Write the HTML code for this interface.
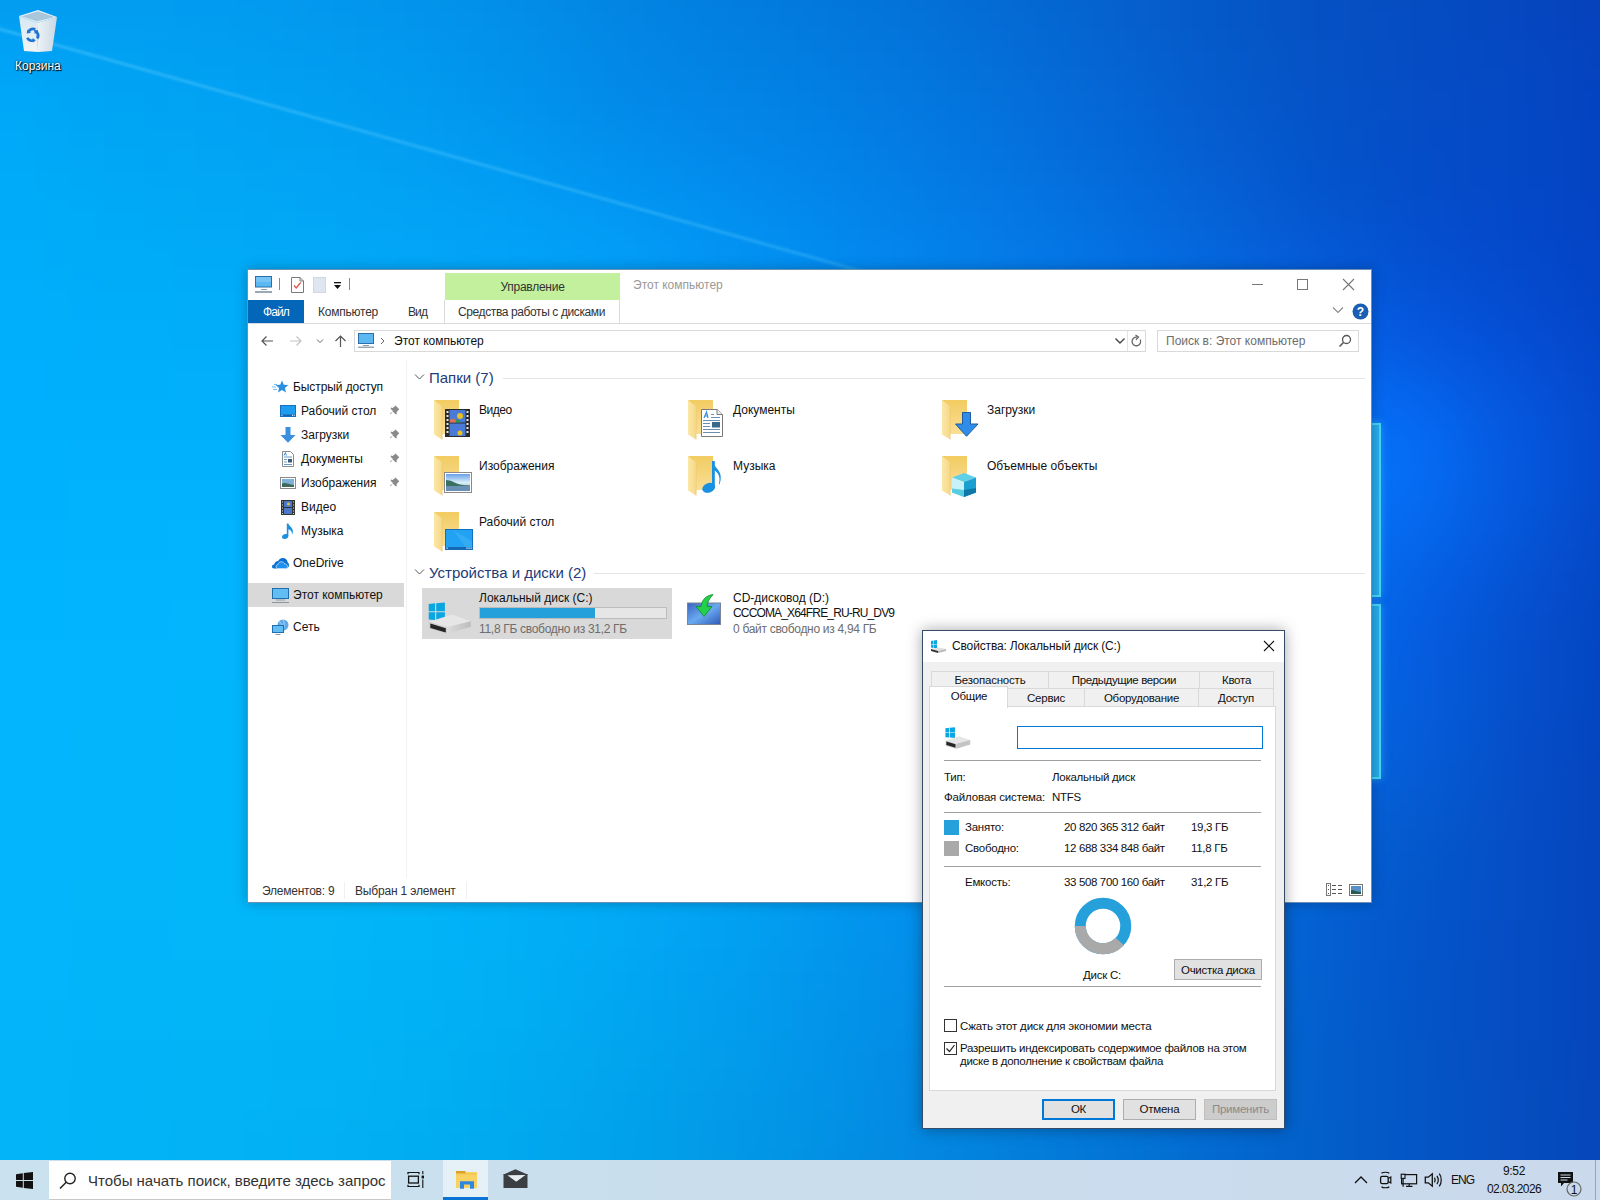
<!DOCTYPE html>
<html><head><meta charset="utf-8">
<style>
*{margin:0;padding:0;box-sizing:border-box}
html,body{width:1600px;height:1200px;overflow:hidden;background:#0590e6}
body{position:relative;font-family:"Liberation Sans",sans-serif;font-size:12px;color:#000}
.a{position:absolute}
.t{position:absolute;white-space:nowrap;line-height:16px;height:16px}
#bgw{position:absolute;left:-80px;top:-80px;width:1760px;height:1360px;filter:blur(18px)}
#bgw div{position:absolute;left:0;width:1760px;height:40px}
</style></head><body>
<div id="bgw"><div style="top:0px;background:linear-gradient(90deg,#0397ed 0px,#0496ec 100px,#0497ed 200px,#0396ee 300px,#0293ec 400px,#028fe8 500px,#0289e5 600px,#0281e0 700px,#027adc 800px,#0374d8 900px,#036dd4 1000px,#0466cf 1100px,#055eca 1200px,#0556c5 1300px,#054fc1 1400px,#054abe 1500px,#0544bb 1600px,#053eb7 1700px)"></div><div style="top:40px;background:linear-gradient(90deg,#029bef 0px,#039aee 100px,#039af0 200px,#0299f0 300px,#0296ee 400px,#0292eb 500px,#028be7 600px,#0283e2 700px,#027dde 800px,#0277db 900px,#0370d6 1000px,#0468d1 1100px,#0560cc 1200px,#0557c7 1300px,#0550c2 1400px,#054bc0 1500px,#0546bd 1600px,#053fb9 1700px)"></div><div style="top:80px;background:linear-gradient(90deg,#019ff2 0px,#029ef2 100px,#029ef2 200px,#019df1 300px,#0299ef 400px,#0295ed 500px,#028ee9 600px,#0286e4 700px,#027fe1 800px,#0279dd 900px,#0372d9 1000px,#046ad4 1100px,#0561ce 1200px,#0558c8 1300px,#0551c4 1400px,#054cc2 1500px,#0547c0 1600px,#0540bb 1700px)"></div><div style="top:120px;background:linear-gradient(90deg,#00a3f5 0px,#00a3f6 100px,#01a1f3 200px,#019ff2 300px,#019cf1 400px,#0198ef 500px,#0191eb 600px,#0288e7 700px,#0282e3 800px,#027ce0 900px,#0375dc 1000px,#046cd7 1100px,#0563d1 1200px,#055aca 1300px,#0552c5 1400px,#054cc3 1500px,#0548c2 1600px,#0541bd 1700px)"></div><div style="top:160px;background:linear-gradient(90deg,#00a6f8 0px,#00a7f8 100px,#00a4f4 200px,#01a2f3 300px,#019ff2 400px,#019af0 500px,#0193ed 600px,#028ae9 700px,#0285e6 800px,#027fe3 900px,#0378df 1000px,#046fda 1100px,#0565d4 1200px,#055bcc 1300px,#0552c7 1400px,#054dc5 1500px,#0548c4 1600px,#0441bf 1700px)"></div><div style="top:200px;background:linear-gradient(90deg,#00a9fa 0px,#00a9f9 100px,#00a6f4 200px,#01a4f4 300px,#02a1f3 400px,#029df2 500px,#0197f0 600px,#028eec 700px,#0288e9 800px,#0282e6 900px,#037ae2 1000px,#0471dd 1100px,#0467d7 1200px,#055dcf 1300px,#0453c9 1400px,#044dc7 1500px,#0448c5 1600px,#0442c0 1700px)"></div><div style="top:240px;background:linear-gradient(90deg,#00abfb 0px,#00abf9 100px,#00a8f5 200px,#01a6f4 300px,#02a4f5 400px,#02a0f4 500px,#019bf3 600px,#0193f0 700px,#028ced 800px,#0285e9 900px,#037de5 1000px,#0474e0 1100px,#046ada 1200px,#055fd3 1300px,#0454cc 1400px,#044dc9 1500px,#0448c7 1600px,#0442c2 1700px)"></div><div style="top:280px;background:linear-gradient(90deg,#00acfc 0px,#00acfa 100px,#00aaf6 200px,#01a8f5 300px,#02a6f6 400px,#02a3f6 500px,#029ff6 600px,#0299f4 700px,#0291f0 800px,#0289ed 900px,#0380e8 1000px,#0477e4 1100px,#046dde 1200px,#0562d7 1300px,#0556d0 1400px,#044ecd 1500px,#0448c9 1600px,#0442c3 1700px)"></div><div style="top:320px;background:linear-gradient(90deg,#00aefd 0px,#00adfa 100px,#00abf7 200px,#01aaf7 300px,#02a8f7 400px,#02a6f8 500px,#02a2f8 600px,#029df7 700px,#0294f3 800px,#028cf0 900px,#0383ec 1000px,#047ae8 1100px,#0470e3 1200px,#0565dd 1300px,#055ad7 1400px,#0450d1 1500px,#0449cc 1600px,#0442c4 1700px)"></div><div style="top:360px;background:linear-gradient(90deg,#00affd 0px,#00aefb 100px,#00adf9 200px,#01acf8 300px,#02aaf9 400px,#02a8f9 500px,#02a5fa 600px,#02a0f9 700px,#0298f6 800px,#028ff2 900px,#0386ef 1000px,#047dec 1100px,#0474e8 1200px,#056ae3 1300px,#055fde 1400px,#0553d7 1500px,#044bcf 1600px,#0443c6 1700px)"></div><div style="top:400px;background:linear-gradient(90deg,#00affe 0px,#00affc 100px,#00aefa 200px,#01adf9 300px,#02acfa 400px,#02aafb 500px,#02a7fb 600px,#02a2fb 700px,#029bf8 800px,#0292f5 900px,#0389f2 1000px,#0480ef 1100px,#0577ed 1200px,#056eea 1300px,#0565e7 1400px,#0558df 1500px,#044ed4 1600px,#0444c8 1700px)"></div><div style="top:440px;background:linear-gradient(90deg,#00b0fe 0px,#00affd 100px,#00affb 200px,#01affa 300px,#02aefb 400px,#02acfc 500px,#02a9fc 600px,#02a4fc 700px,#029dfa 800px,#0395f7 900px,#038cf5 1000px,#0483f3 1100px,#057bf1 1200px,#0573f0 1300px,#066bef 1400px,#0560e8 1500px,#0552d8 1600px,#0446c9 1700px)"></div><div style="top:480px;background:linear-gradient(90deg,#00b1ff 0px,#00b0fd 100px,#01b0fc 200px,#01b0fb 300px,#02affc 400px,#02aefd 500px,#02abfd 600px,#02a6fd 700px,#029ffb 800px,#0397f9 900px,#038ef7 1000px,#0486f6 1100px,#057ef5 1200px,#0577f5 1300px,#0671f6 1400px,#0568f1 1500px,#0556dc 1600px,#0447ca 1700px)"></div><div style="top:520px;background:linear-gradient(90deg,#00b2ff 0px,#00b1fe 100px,#01b1fd 200px,#02b1fc 300px,#02b1fc 400px,#02affd 500px,#02acfe 600px,#02a7fd 700px,#02a1fc 800px,#0398fa 900px,#0390f9 1000px,#0488f8 1100px,#0580f8 1200px,#057af9 1300px,#0675fa 1400px,#056cf4 1500px,#0557dd 1600px,#0447c9 1700px)"></div><div style="top:560px;background:linear-gradient(90deg,#00b3ff 0px,#00b2fe 100px,#01b2fd 200px,#02b2fd 300px,#02b2fd 400px,#02b0fe 500px,#02adfe 600px,#02a9fe 700px,#02a2fd 800px,#039afb 900px,#0392fa 1000px,#0489f9 1100px,#0582f9 1200px,#057bfa 1300px,#0675fa 1400px,#056bf1 1500px,#0557db 1600px,#0447c8 1700px)"></div><div style="top:600px;background:linear-gradient(90deg,#00b3ff 0px,#01b3fe 100px,#01b3fd 200px,#02b3fd 300px,#02b3fd 400px,#02b1fe 500px,#02aefe 600px,#02a9fe 700px,#02a3fd 800px,#039bfc 900px,#0393fb 1000px,#048afa 1100px,#0583fa 1200px,#057bfa 1300px,#0673f7 1400px,#0566ec 1500px,#0555d7 1600px,#0446c5 1700px)"></div><div style="top:640px;background:linear-gradient(90deg,#01b4ff 0px,#01b4fe 100px,#02b4fd 200px,#02b4fd 300px,#02b4fd 400px,#02b2fe 500px,#02affe 600px,#02aafe 700px,#02a4fd 800px,#039cfc 900px,#0393fb 1000px,#048bfa 1100px,#0583fa 1200px,#057af8 1300px,#0670f3 1400px,#0561e5 1500px,#0552d3 1600px,#0445c3 1700px)"></div><div style="top:680px;background:linear-gradient(90deg,#01b4ff 0px,#01b4fe 100px,#02b4fd 200px,#02b5fd 300px,#02b4fd 400px,#02b3fe 500px,#02b0fe 600px,#02abfd 700px,#02a4fd 800px,#039cfc 900px,#0394fa 1000px,#048bf9 1100px,#0582f8 1200px,#0579f6 1300px,#066def 1400px,#055ee1 1500px,#0550cf 1600px,#0444c0 1700px)"></div><div style="top:720px;background:linear-gradient(90deg,#01b5ff 0px,#02b5fe 100px,#02b5fd 200px,#02b5fd 300px,#02b5fd 400px,#02b3fd 500px,#02b0fd 600px,#02abfd 700px,#02a4fc 800px,#039cfb 900px,#0394fa 1000px,#048bf8 1100px,#0582f6 1200px,#0578f3 1300px,#066cec 1400px,#055dde 1500px,#054fcd 1600px,#0443bf 1700px)"></div><div style="top:760px;background:linear-gradient(90deg,#02b5ff 0px,#02b5fe 100px,#02b5fd 200px,#02b6fc 300px,#02b5fc 400px,#02b4fd 500px,#02b0fd 600px,#02abfc 700px,#02a4fb 800px,#039cfa 900px,#0394f8 1000px,#048af6 1100px,#0581f4 1200px,#0576f0 1300px,#066ae8 1400px,#055ddc 1500px,#054fcb 1600px,#0443be 1700px)"></div><div style="top:800px;background:linear-gradient(90deg,#02b5fe 0px,#02b5fd 100px,#03b6fc 200px,#02b6fc 300px,#02b6fc 400px,#02b4fc 500px,#02b0fc 600px,#02abfb 700px,#02a4fa 800px,#039cf8 900px,#0393f6 1000px,#048af4 1100px,#047ff1 1200px,#0575ec 1300px,#0569e4 1400px,#055cd9 1500px,#054ec9 1600px,#0443bd 1700px)"></div><div style="top:840px;background:linear-gradient(90deg,#02b6fe 0px,#02b5fd 100px,#03b6fc 200px,#02b6fc 300px,#02b6fb 400px,#02b4fb 500px,#02b0fb 600px,#02abfa 700px,#02a4f8 800px,#039bf7 900px,#0392f4 1000px,#0489f2 1100px,#047eee 1200px,#0573e8 1300px,#0567df 1400px,#055bd4 1500px,#054ec7 1600px,#0543bc 1700px)"></div><div style="top:880px;background:linear-gradient(90deg,#02b6fe 0px,#03b6fc 100px,#03b6fb 200px,#02b6fb 300px,#02b6fb 400px,#02b4fa 500px,#02b0fa 600px,#02abf8 700px,#02a3f7 800px,#039bf5 900px,#0391f2 1000px,#0487ef 1100px,#047dea 1200px,#0471e4 1300px,#0565da 1400px,#0559ce 1500px,#054ec5 1600px,#0543bc 1700px)"></div><div style="top:920px;background:linear-gradient(90deg,#02b6fd 0px,#03b5fc 100px,#03b6fb 200px,#02b6fa 300px,#02b6fa 400px,#02b4f9 500px,#02b0f8 600px,#02aaf7 700px,#02a3f5 800px,#029af3 900px,#0390f0 1000px,#0386ec 1100px,#047be7 1200px,#046fe0 1300px,#0463d6 1400px,#0457cb 1500px,#054dc4 1600px,#0543bc 1700px)"></div><div style="top:960px;background:linear-gradient(90deg,#02b6fd 0px,#03b5fb 100px,#03b6fa 200px,#02b6fa 300px,#02b6f9 400px,#02b4f8 500px,#02aff7 600px,#02a9f5 700px,#02a2f3 800px,#0299f1 900px,#038fee 1000px,#0385ea 1100px,#047ae4 1200px,#046edd 1300px,#0461d3 1400px,#0456ca 1500px,#054dc4 1600px,#0543bb 1700px)"></div><div style="top:1000px;background:linear-gradient(90deg,#03b6fc 0px,#03b5fb 100px,#02b5fa 200px,#02b6f9 300px,#02b6f8 400px,#01b3f7 500px,#01aff6 600px,#02a9f4 700px,#02a1f1 800px,#0298ee 900px,#038eeb 1000px,#0384e7 1100px,#0378e1 1200px,#046dda 1300px,#0460d1 1400px,#0455c9 1500px,#054cc3 1600px,#0544bb 1700px)"></div><div style="top:1040px;background:linear-gradient(90deg,#03b6fc 0px,#03b5fa 100px,#02b5f9 200px,#02b5f8 300px,#01b5f7 400px,#01b2f6 500px,#01aef4 600px,#01a7f2 700px,#029fef 800px,#0296ec 900px,#038de9 1000px,#0382e4 1100px,#0377df 1200px,#036bd7 1300px,#045fcf 1400px,#0454c8 1500px,#054cc2 1600px,#0544bb 1700px)"></div><div style="top:1080px;background:linear-gradient(90deg,#03b6fb 0px,#03b4fa 100px,#02b4f8 200px,#02b5f7 300px,#01b4f6 400px,#01b1f5 500px,#01adf3 600px,#01a6f0 700px,#029eed 800px,#0295ea 900px,#038ce7 1000px,#0381e2 1100px,#0376dc 1200px,#036bd5 1300px,#035fce 1400px,#0454c7 1500px,#054cc2 1600px,#0544bb 1700px)"></div><div style="top:1120px;background:linear-gradient(90deg,#03b5fb 0px,#03b4f9 100px,#02b3f7 200px,#02b4f6 300px,#01b3f5 400px,#01b0f3 500px,#01abf1 600px,#01a5ee 700px,#029deb 800px,#0294e8 900px,#038ae5 1000px,#0380e0 1100px,#0375da 1200px,#036ad3 1300px,#035fcc 1400px,#0455c6 1500px,#054cc1 1600px,#0644ba 1700px)"></div><div style="top:1160px;background:linear-gradient(90deg,#03b5fa 0px,#03b4f8 100px,#02b3f7 200px,#02b3f5 300px,#02b2f4 400px,#01aff2 500px,#01aaf0 600px,#01a3ed 700px,#029be9 800px,#0293e6 900px,#0389e3 1000px,#037fde 1100px,#0375d8 1200px,#0369d2 1300px,#035fcb 1400px,#0455c6 1500px,#054dc0 1600px,#0645ba 1700px)"></div><div style="top:1200px;background:linear-gradient(90deg,#03b5fa 0px,#03b4f8 100px,#02b3f6 200px,#02b2f4 300px,#02b0f3 400px,#01adf1 500px,#01a8ee 600px,#01a2eb 700px,#029ae8 800px,#0292e4 900px,#0388e1 1000px,#037edc 1100px,#0374d7 1200px,#0369d0 1300px,#035fca 1400px,#0455c5 1500px,#054dc0 1600px,#0645b9 1700px)"></div><div style="top:1240px;background:linear-gradient(90deg,#03b5f9 0px,#03b3f7 100px,#02b2f5 200px,#02b1f3 300px,#02aff2 400px,#01acef 500px,#01a7ed 600px,#01a1ea 700px,#0299e6 800px,#0290e3 900px,#0387df 1000px,#037eda 1100px,#0373d5 1200px,#0369cf 1300px,#035fc9 1400px,#0456c4 1500px,#054dbf 1600px,#0645b9 1700px)"></div><div style="top:1280px;background:linear-gradient(90deg,#03b5f9 0px,#03b3f7 100px,#02b2f4 200px,#02b0f3 300px,#02aef0 400px,#01abee 500px,#01a6eb 600px,#019fe8 700px,#0298e5 800px,#028fe1 900px,#0386dd 1000px,#037dd9 1100px,#0373d4 1200px,#0369ce 1300px,#045fc9 1400px,#0456c3 1500px,#054ebe 1600px,#0645b8 1700px)"></div><div style="top:1320px;background:linear-gradient(90deg,#03b5f8 0px,#02b3f6 100px,#02b1f4 200px,#02aff2 300px,#02adef 400px,#02a9ed 500px,#01a4ea 600px,#029ee7 700px,#0297e4 800px,#028ee0 900px,#0386dc 1000px,#037cd7 1100px,#0372d2 1200px,#0368cd 1300px,#045fc8 1400px,#0456c2 1500px,#054ebd 1600px,#0646b7 1700px)"></div></div>
<!-- light ray -->
<div class="a" style="left:-20px;top:21.5px;width:1000px;height:2.5px;background:linear-gradient(90deg,rgba(90,205,255,.45),rgba(90,205,255,.35) 80%,rgba(90,205,255,.25));transform-origin:0 50%;transform:rotate(15.7deg);filter:blur(.8px)"></div>

<!-- recycle bin -->
<svg class="a" style="left:17px;top:8px" width="42" height="46" viewBox="0 0 42 46">
  <defs><linearGradient id="rbl" x1="0" y1="0" x2="0" y2="1"><stop offset="0" stop-color="#d6e8f2"/><stop offset="1" stop-color="#f2f4f5"/></linearGradient><linearGradient id="rbr" x1="0" y1="0" x2="1" y2="0"><stop offset="0" stop-color="#eef3f6"/><stop offset="1" stop-color="#c8d8e4"/></linearGradient></defs>
  <path d="M2 8L20 15 21 44 7 43Z" fill="url(#rbl)"/>
  <path d="M20 15L40 9 35 43 21 44Z" fill="url(#rbr)"/>
  <path d="M2 8L21 2 40 9 20 15Z" fill="#eaf4fa"/>
  <path d="M4.5 8.3L21 3.2 37.5 9 20 13.6Z" fill="#a9c6da"/>
  <g fill="#1f74d4"><path d="M10.5 22.5a6.5 6.5 0 0 1 8.5-2.3l-1.3 2.4a3.8 3.8 0 0 0-4.8 1.4l1.2.8-4.3.6.4-4.2z"/><path d="M21 23.5a6.5 6.5 0 0 1 .3 7.8l-2.2-1.5a3.8 3.8 0 0 0-.1-4.5l-1.1.8-.9-4.1 4.1.3z"/><path d="M16.5 33.8a6.5 6.5 0 0 1-7.4-3.5l2.4-1a3.8 3.8 0 0 0 4.2 2l-.3-1.4 3.4 2.4-3 2.6z"/></g>
</svg>
<div class="t" style="left:15px;top:58px;color:#fff;text-shadow:0 0 2px #000,1px 1px 1px #000">Корзина</div>

<!-- windows logo panes glow on right -->
<div class="a" style="left:1350px;top:423px;width:31px;height:174px;border:2px solid #45d6f4;border-left:none;border-right-width:2.5px;background:linear-gradient(90deg,rgba(40,150,215,.8),rgba(45,185,235,.85));box-shadow:0 0 8px rgba(70,200,255,.55)"></div>
<div class="a" style="left:1350px;top:604px;width:31px;height:175px;border:2px solid #45d6f4;border-left:none;border-right-width:2.5px;background:linear-gradient(90deg,rgba(40,150,215,.8),rgba(45,185,235,.85));box-shadow:0 0 8px rgba(70,200,255,.55)"></div>
<!-- Explorer window -->
<div class="a" id="exp" style="left:247px;top:269px;width:1125px;height:634px;background:#fff;border:1px solid rgba(10,70,130,.6);box-shadow:0 0 12px rgba(0,0,0,.25)"></div>
<!-- QAT -->
<svg class="a" style="left:255px;top:276px" width="18" height="17" viewBox="0 0 18 17"><rect x="0.5" y="0.5" width="16" height="10.5" fill="#5cb8f0" stroke="#2a6fa8"/><rect x="1" y="1" width="15" height="5" fill="#8fd0f8" opacity=".5"/><rect x="6" y="13" width="6" height="1" fill="#8aa0b0"/><rect x="0" y="15" width="17" height="2" fill="#9aa8b4"/></svg>
<div class="a" style="left:279px;top:278px;width:1px;height:12px;background:#8a8a8a"></div>
<svg class="a" style="left:291px;top:277px" width="13" height="16" viewBox="0 0 13 16"><path d="M.5 .5h8.5l3.5 3.5v11.5h-12z" fill="#fff" stroke="#7a7a7a"/><path d="M9 .5v3.5h3.5" fill="none" stroke="#7a7a7a"/><path d="M3 8.5l2.2 2.5 4.5-5.5" fill="none" stroke="#e2574c" stroke-width="1.4"/></svg>
<svg class="a" style="left:313px;top:277px" width="14" height="16" viewBox="0 0 14 16"><rect x=".5" y=".5" width="12" height="15" fill="#dfe6f2" stroke="#d0d8e6"/></svg>
<svg class="a" style="left:333px;top:281px" width="9" height="9" viewBox="0 0 9 9"><rect x="1" y="1" width="7" height="1.3" fill="#111"/><path d="M1 4h7l-3.5 4z" fill="#111"/></svg>
<div class="a" style="left:349px;top:278px;width:1px;height:12px;background:#8a8a8a"></div>

<!-- contextual tab group -->
<div class="a" style="left:445px;top:273px;width:175px;height:27px;background:#c2f09c"></div>
<div class="t" style="left:445px;width:175px;text-align:center;top:279px;color:#333;letter-spacing:-.25px">Управление</div>
<div class="t" style="left:633px;top:277px;color:#999">Этот компьютер</div>

<!-- window controls -->
<div class="a" style="left:1252px;top:284px;width:11px;height:1px;background:#777"></div>
<div class="a" style="left:1297px;top:279px;width:11px;height:11px;border:1px solid #777"></div>
<svg class="a" style="left:1342px;top:278px" width="13" height="13" viewBox="0 0 13 13"><path d="M1 1l11 11M12 1L1 12" stroke="#777" stroke-width="1.1"/></svg>

<!-- ribbon tabs -->
<div class="a" style="left:248px;top:300px;width:56px;height:23px;background:#0366b8"></div>
<div class="t" style="left:248px;width:56px;text-align:center;top:304px;color:#fff;letter-spacing:-.9px">Файл</div>
<div class="t" style="left:318px;top:304px;color:#333;letter-spacing:-.23px">Компьютер</div>
<div class="t" style="left:408px;top:304px;color:#333;letter-spacing:-.9px">Вид</div>
<div class="a" style="left:444px;top:300px;width:1px;height:23px;background:#dadbdc"></div>
<div class="a" style="left:619px;top:300px;width:1px;height:23px;background:#dadbdc"></div>
<div class="t" style="left:458px;top:304px;color:#333;letter-spacing:-.39px">Средства работы с дисками</div>
<svg class="a" style="left:1332px;top:306px" width="12" height="8" viewBox="0 0 12 8"><path d="M1 1.5l5 5 5-5" fill="none" stroke="#8a8a8a" stroke-width="1.1"/></svg>
<svg class="a" style="left:1352px;top:303px" width="17" height="17" viewBox="0 0 17 17"><circle cx="8.5" cy="8.5" r="8" fill="#1a5fb4"/><text x="8.5" y="13" text-anchor="middle" font-family="Liberation Sans" font-weight="bold" font-size="12" fill="#fff">?</text></svg>
<div class="a" style="left:248px;top:323px;width:1123px;height:1px;background:#dadbdc"></div>

<!-- address row -->
<svg class="a" style="left:260px;top:335px" width="14" height="12" viewBox="0 0 14 12"><path d="M13 6H2M6.5 1.5L2 6l4.5 4.5" fill="none" stroke="#555" stroke-width="1.2"/></svg>
<svg class="a" style="left:289px;top:335px" width="14" height="12" viewBox="0 0 14 12"><path d="M1 6h11M7.5 1.5L12 6l-4.5 4.5" fill="none" stroke="#c4c4c4" stroke-width="1.2"/></svg>
<svg class="a" style="left:316px;top:338px" width="8" height="6" viewBox="0 0 8 6"><path d="M1 1.5l3 3 3-3" fill="none" stroke="#666" stroke-width="1"/></svg>
<svg class="a" style="left:334px;top:334px" width="13" height="14" viewBox="0 0 13 14"><path d="M6.5 13V2M1.5 7l5-5 5 5" fill="none" stroke="#555" stroke-width="1.2"/></svg>
<div class="a" style="left:354px;top:330px;width:792px;height:22px;border:1px solid #d9d9d9"></div>
<svg class="a" style="left:358px;top:333px" width="17" height="15" viewBox="0 0 17 15"><rect x=".5" y=".5" width="15" height="10" fill="#5cb8f0" stroke="#2a6fa8"/><rect x="5" y="12" width="6" height="1" fill="#8aa0b0"/><rect x="0" y="13.5" width="16" height="1.5" fill="#9aa8b4"/></svg>
<svg class="a" style="left:380px;top:337px" width="5" height="8" viewBox="0 0 5 8"><path d="M1 1l3 3-3 3" fill="none" stroke="#666" stroke-width="1"/></svg>
<div class="t" style="left:394px;top:333px;color:#111">Этот компьютер</div>
<svg class="a" style="left:1114px;top:337px" width="12" height="8" viewBox="0 0 12 8"><path d="M1.5 1.5l4.5 4.5 4.5-4.5" fill="none" stroke="#444" stroke-width="1.4"/></svg>
<div class="a" style="left:1127px;top:331px;width:1px;height:20px;background:#e3e3e3"></div>
<svg class="a" style="left:1130px;top:334px" width="13" height="14" viewBox="0 0 13 14"><path d="M10.2 5.5A4.3 4.3 0 1 1 7 3.2" fill="none" stroke="#666" stroke-width="1.3"/><path d="M5.5 1l3 2.2-2.5 2.6" fill="none" stroke="#666" stroke-width="1.3"/></svg>
<div class="a" style="left:1157px;top:330px;width:202px;height:22px;border:1px solid #d9d9d9"></div>
<div class="t" style="left:1166px;top:333px;color:#6d6d6d">Поиск в: Этот компьютер</div>
<svg class="a" style="left:1338px;top:334px" width="14" height="14" viewBox="0 0 14 14"><circle cx="8.5" cy="5.5" r="4" fill="none" stroke="#555" stroke-width="1.3"/><path d="M5.5 8.5L1.5 12.5" stroke="#555" stroke-width="1.6"/></svg>

<!-- symbol defs -->
<svg width="0" height="0" style="position:absolute">
 <defs>
  <linearGradient id="fback" x1="0" y1="0" x2="0" y2="1"><stop offset="0" stop-color="#f2cc62"/><stop offset="1" stop-color="#f9de96"/></linearGradient>
  <linearGradient id="ffront" x1="0" y1="0" x2="1" y2="0"><stop offset="0" stop-color="#fce7a6"/><stop offset="1" stop-color="#f6d98a"/></linearGradient>
  <symbol id="folder" viewBox="0 0 40 40">
   <path d="M0 0H25V34H8Z" fill="url(#fback)"/>
   <path d="M0 0L8.1 6.5V39.6L0 34.5Z" fill="url(#ffront)"/>
   <path d="M8.1 6.5V39.6" stroke="#e9c56b" stroke-width=".6"/>
  </symbol>
 </defs>
</svg>

<!-- nav pane -->
<div class="a" style="left:406px;top:360px;width:1px;height:518px;background:#f2f2f2"></div>
<div class="a" style="left:248px;top:583px;width:156px;height:24px;background:#d9d9d9"></div>

<svg class="a" style="left:272px;top:380px" width="17" height="14" viewBox="0 0 17 14"><path d="M10 .5l1.8 4.2 4.6.3-3.5 3 1.1 4.5L10 10l-4 2.5 1.1-4.5-3.5-3 4.6-.3z" fill="#2b8fe0"/><path d="M0 7h4M1 9.5h4M2 4.5h3" stroke="#7bbcf0" stroke-width="1"/></svg>
<div class="t" style="left:293px;top:379px;color:#111;letter-spacing:-.08px">Быстрый доступ</div>

<svg class="a" style="left:280px;top:405px" width="16" height="12" viewBox="0 0 16 12"><rect x=".5" y=".5" width="15" height="11" fill="#1e9cf0" stroke="#1670c0"/><rect x="1" y="9.5" width="14" height="1.5" fill="#1565b0"/><rect x="1.5" y="9.8" width="1" height="1" fill="#fff"/><rect x="12" y="9.8" width="1" height="1" fill="#fff"/><rect x="13.7" y="9.8" width="1" height="1" fill="#fff"/></svg>
<div class="t" style="left:301px;top:403px;color:#111">Рабочий стол</div>
<svg class="a" style="left:280px;top:427px" width="16" height="16" viewBox="0 0 16 16"><path d="M5.5 0h5v8h5L8 15.8 .5 8h5z" fill="#3a8fdf"/></svg>
<div class="t" style="left:301px;top:427px;color:#111">Загрузки</div>
<svg class="a" style="left:282px;top:451px" width="12" height="16" viewBox="0 0 12 16"><path d="M.5 .5h8l3 3v12h-11z" fill="#fff" stroke="#8a8a8a"/><path d="M2 6h8M2 8.5h3M2 11h3M2 13.5h8" stroke="#6a9ac8" stroke-width="1"/><rect x="6" y="8" width="4" height="3.5" fill="#3a5a7a"/><path d="M2 4.5l1.5-3 .8 3" stroke="#3a8fdf" fill="none"/></svg>
<div class="t" style="left:301px;top:451px;color:#111">Документы</div>
<svg class="a" style="left:280px;top:477px" width="16" height="12" viewBox="0 0 16 12"><rect x=".5" y=".5" width="15" height="11" fill="#fff" stroke="#8a8a8a"/><rect x="2" y="2" width="12" height="8" fill="#7fb0d8"/><path d="M2 6.5c3-1.5 6 .5 12 1.5V10H2z" fill="#3e6a5a"/></svg>
<div class="t" style="left:301px;top:475px;color:#111">Изображения</div>
<svg class="a" style="left:281px;top:500px" width="14" height="15" viewBox="0 0 14 15"><rect x="0" y="0" width="14" height="15" fill="#333"/><rect x="3" y="1" width="8" height="6" fill="#4a78c8"/><rect x="3" y="8" width="8" height="6" fill="#4a78c8"/><circle cx="7.5" cy="4" r="1.6" fill="#e0c040"/><g fill="#ddd"><rect x="1" y="1.5" width="1" height="1"/><rect x="1" y="4.5" width="1" height="1"/><rect x="1" y="7.5" width="1" height="1"/><rect x="1" y="10.5" width="1" height="1"/><rect x="1" y="13" width="1" height="1"/><rect x="12" y="1.5" width="1" height="1"/><rect x="12" y="4.5" width="1" height="1"/><rect x="12" y="7.5" width="1" height="1"/><rect x="12" y="10.5" width="1" height="1"/><rect x="12" y="13" width="1" height="1"/></g></svg>
<div class="t" style="left:301px;top:499px;color:#111">Видео</div>
<svg class="a" style="left:281px;top:523px" width="13" height="16" viewBox="0 0 13 16"><path d="M5.8 .5h1.6c.5 2.5 4.5 4 4.5 8 0 1.5-.5 2.5-1 3 .5-2.5-1-4.5-3.5-5.3V13c0 1.8-1.8 3-3.8 3C2 16 1 15 1 14c0-1.8 2-3 4-3 .3 0 .6 0 .8.1z" fill="#1a90e0"/></svg>
<div class="t" style="left:301px;top:523px;color:#111">Музыка</div>
<svg class="a" style="left:390px;top:405px" width="10" height="10" viewBox="0 0 10 10"><path d="M5.5 .5l4 4-1.2.6-1.8 2.4.3 1.5-1 .5L2.8 6.5.8 9.2 0 9l.6-.8L3 6.2.5 3.6 1 2.6l1.5.3L5 1.2z" fill="#8a8a8a"/></svg>
<svg class="a" style="left:390px;top:429px" width="10" height="10" viewBox="0 0 10 10"><path d="M5.5 .5l4 4-1.2.6-1.8 2.4.3 1.5-1 .5L2.8 6.5.8 9.2 0 9l.6-.8L3 6.2.5 3.6 1 2.6l1.5.3L5 1.2z" fill="#8a8a8a"/></svg>
<svg class="a" style="left:390px;top:453px" width="10" height="10" viewBox="0 0 10 10"><path d="M5.5 .5l4 4-1.2.6-1.8 2.4.3 1.5-1 .5L2.8 6.5.8 9.2 0 9l.6-.8L3 6.2.5 3.6 1 2.6l1.5.3L5 1.2z" fill="#8a8a8a"/></svg>
<svg class="a" style="left:390px;top:477px" width="10" height="10" viewBox="0 0 10 10"><path d="M5.5 .5l4 4-1.2.6-1.8 2.4.3 1.5-1 .5L2.8 6.5.8 9.2 0 9l.6-.8L3 6.2.5 3.6 1 2.6l1.5.3L5 1.2z" fill="#8a8a8a"/></svg>

<svg class="a" style="left:272px;top:558px" width="17" height="11" viewBox="0 0 17 11"><path d="M2 10.5C.7 10.5 0 9.6 0 8.5 0 7.3 1 6.5 2.2 6.6 2.6 4.3 4.3 3 6.2 3c.9-1.8 2.6-3 4.6-3 2.6 0 4.7 2 4.9 4.5C16.5 5 17 6 17 7.2c0 1.9-1.4 3.3-3.2 3.3z" fill="#0a6fd0"/><path d="M6 10.5c-1.1 0-2-.8-2-1.9 0-1 .8-1.8 1.8-1.9.3-1.7 1.8-3 3.6-3 1.5 0 2.8.9 3.4 2.2 1.5 0 2.7 1.2 2.7 2.7 0 1-.8 1.9-1.9 1.9z" fill="#1e90f0" stroke="#fff" stroke-width=".6"/></svg>
<div class="t" style="left:293px;top:555px;color:#111">OneDrive</div>
<svg class="a" style="left:272px;top:588px" width="17" height="15" viewBox="0 0 17 15"><rect x=".5" y=".5" width="16" height="10" fill="#62bdf2" stroke="#1f6fae"/><rect x="4" y="11.5" width="9" height="1" fill="#8fa0ae"/><rect x="0" y="14" width="17" height="1" fill="#8a949c"/></svg>
<div class="t" style="left:293px;top:587px;color:#111">Этот компьютер</div>
<svg class="a" style="left:272px;top:619px" width="17" height="16" viewBox="0 0 17 16"><circle cx="11" cy="6" r="5.5" fill="#5fa8e8"/><path d="M7 3c2 .5 3 2 3 4M11 .5c1.5 2 1.5 8 0 11" stroke="#cfe6fa" fill="none" stroke-width=".7"/><rect x=".5" y="6.5" width="11" height="7" fill="#62bdf2" stroke="#1f6fae"/><rect x="3.5" y="15" width="5" height="1" fill="#8a949c"/></svg>
<div class="t" style="left:293px;top:619px;color:#111">Сеть</div>

<!-- content: folders group -->
<svg class="a" style="left:414px;top:373px" width="11" height="8" viewBox="0 0 11 8"><path d="M1 1.5l4.5 4.5 4.5-4.5" fill="none" stroke="#555" stroke-width="1"/></svg>
<div class="t" style="left:429px;top:368px;height:20px;line-height:20px;font-size:15px;color:#233b78">Папки (7)</div>
<div class="a" style="left:503px;top:378px;width:862px;height:1px;background:#e5e5e5"></div>

<svg class="a" style="left:434px;top:400px" width="40" height="40"><use href="#folder"/></svg>
<svg class="a" style="left:445px;top:409px" width="25" height="28" viewBox="0 0 25 28"><rect x="0" y="0" width="25" height="28" fill="#2a2a2a"/><rect x="4.5" y="1" width="16" height="12.5" fill="#4a7ad8"/><rect x="4.5" y="14.5" width="16" height="12.5" fill="#4a7ad8"/><circle cx="15" cy="7" r="3" fill="#e8c020"/><path d="M5 11c2-2 4-1 6 0v2.5H5z" fill="#e07050"/><path d="M12 10l4 3.5H10z" fill="#2a9a40"/><circle cx="15" cy="24" r="2.5" fill="#e8c020"/><g fill="#e8e8e8"><rect x="1.5" y="2" width="2" height="2"/><rect x="1.5" y="6" width="2" height="2"/><rect x="1.5" y="10" width="2" height="2"/><rect x="1.5" y="14" width="2" height="2"/><rect x="1.5" y="18" width="2" height="2"/><rect x="1.5" y="22" width="2" height="2"/><rect x="21.5" y="2" width="2" height="2"/><rect x="21.5" y="6" width="2" height="2"/><rect x="21.5" y="10" width="2" height="2"/><rect x="21.5" y="14" width="2" height="2"/><rect x="21.5" y="18" width="2" height="2"/><rect x="21.5" y="22" width="2" height="2"/></g></svg>
<div class="t" style="left:479px;top:402px;color:#111;letter-spacing:-.5px">Видео</div>

<svg class="a" style="left:688px;top:400px" width="40" height="40"><use href="#folder"/></svg>
<svg class="a" style="left:701px;top:409px" width="22" height="28" viewBox="0 0 22 28"><path d="M.5 .5h15.5l5.5 5v22h-21z" fill="#fff" stroke="#7a7a7a"/><path d="M16 .5v5h5.5" fill="#eee" stroke="#7a7a7a"/><path d="M3 9l2.5-6 1.5 6M4 7h3" stroke="#3a8fdf" fill="none" stroke-width="1.2"/><path d="M10 5.5h3M10 8.5h9M2 11.5h17M2 14.5h7M2 17.5h7M2 20.5h17M2 23.5h17" stroke="#6a8fb0" stroke-width="1"/><rect x="11" y="13" width="8" height="5.5" fill="#3a6a8a"/></svg>
<div class="t" style="left:733px;top:402px;color:#111">Документы</div>

<svg class="a" style="left:942px;top:400px" width="40" height="40"><use href="#folder"/></svg>
<svg class="a" style="left:955px;top:412px" width="24" height="25" viewBox="0 0 24 25"><path d="M7.5 .5h8v11.5H23L11.5 24.3 .5 12h7z" fill="#2f8ce8" stroke="#1f5a9c" stroke-width="1"/></svg>
<div class="t" style="left:987px;top:402px;color:#111">Загрузки</div>

<svg class="a" style="left:434px;top:456px" width="40" height="40"><use href="#folder"/></svg>
<svg class="a" style="left:444px;top:472px" width="28" height="21" viewBox="0 0 28 21"><rect x=".5" y=".5" width="27" height="20" fill="#fff" stroke="#8a8a8a"/><defs><linearGradient id="sky" x1="0" y1="0" x2="0" y2="1"><stop offset="0" stop-color="#6aa0e8"/><stop offset=".5" stop-color="#d8eef8"/><stop offset="1" stop-color="#8ab0c8"/></linearGradient></defs><rect x="2" y="2" width="24" height="17" fill="url(#sky)"/><path d="M2 8c5 0 9 3 14 4.5 4 1 7 .5 10 1V14H2z" fill="#3a7060"/><rect x="2" y="14" width="24" height="5" fill="#6a90b8"/></svg>
<div class="t" style="left:479px;top:458px;color:#111">Изображения</div>

<svg class="a" style="left:688px;top:456px" width="40" height="40"><use href="#folder"/></svg>
<svg class="a" style="left:700px;top:459px" width="24" height="34" viewBox="0 0 24 34"><rect x="12" y="2" width="2.8" height="27" fill="#1a90e0"/><ellipse cx="8.7" cy="28.8" rx="6.6" ry="4.7" transform="rotate(-22 8.7 28.8)" fill="#1a90e0"/><path d="M12.5 2c1 4 3.5 6 6 9.5 2.6 3.6 3 8 1.2 13.5-.3.6-.8.5-.7-.1 1.3-5.5.2-9.4-3-12.3-1.2-1-2.3-1.8-3.5-2.4z" fill="#1a90e0"/></svg>
<div class="t" style="left:733px;top:458px;color:#111">Музыка</div>

<svg class="a" style="left:942px;top:456px" width="40" height="40"><use href="#folder"/></svg>
<svg class="a" style="left:952px;top:473px" width="25" height="25" viewBox="0 0 25 25"><path d="M0 4.5L12 0l12 4.5-12 4.5z" fill="#5fd0e8"/><path d="M0 4.5l12 4.5V24L0 19.5z" fill="#c8f2fa"/><path d="M24 4.5L12 9V24l12-4.5z" fill="#1a9fd0"/><path d="M12 17l12-2v4.5L12 24z" fill="#0e78a8"/><path d="M0 15.5l12 1.5V24L0 19.5z" fill="#58cce0"/></svg>
<div class="t" style="left:987px;top:458px;color:#111">Объемные объекты</div>

<svg class="a" style="left:434px;top:512px" width="40" height="40"><use href="#folder"/></svg>
<svg class="a" style="left:445px;top:529px" width="28" height="21" viewBox="0 0 28 21"><rect x=".5" y=".5" width="27" height="20" fill="#22a2f2" stroke="#1270c0"/><path d="M8 1L22 20H27V12z" fill="#44b6f8" opacity=".5"/><rect x="1" y="18" width="26" height="2.5" fill="#1468b4"/><g fill="#fff"><rect x="1.5" y="18.5" width="1.2" height="1.2"/><rect x="21.5" y="18.5" width="1.2" height="1.2"/><rect x="23.5" y="18.5" width="1.2" height="1.2"/><rect x="25.5" y="18.5" width="1.2" height="1.2"/></g></svg>
<div class="t" style="left:479px;top:514px;color:#111">Рабочий стол</div>

<!-- devices group -->
<svg class="a" style="left:414px;top:568px" width="11" height="8" viewBox="0 0 11 8"><path d="M1 1.5l4.5 4.5 4.5-4.5" fill="none" stroke="#555" stroke-width="1"/></svg>
<div class="t" style="left:429px;top:563px;height:20px;line-height:20px;font-size:15px;color:#233b78">Устройства и диски (2)</div>
<div class="a" style="left:594px;top:573px;width:771px;height:1px;background:#e5e5e5"></div>

<div class="a" style="left:422px;top:588px;width:250px;height:51px;background:#d9d9d9"></div>
<svg class="a" style="left:428px;top:602px" width="44" height="34" viewBox="0 0 44 34"><defs><linearGradient id="drf" x1="0" y1="0" x2="1" y2="0"><stop offset="0" stop-color="#dcdcdc"/><stop offset="1" stop-color="#bdbdbd"/></linearGradient></defs><path d="M.7 2L7.1 1.3V9.3H.7zM8.2 1.2L16.9.4V9.3H8.2zM.7 10.2H7.1V18L.7 17.4zM8.2 10.2H16.9V18.8L8.2 18z" fill="#0aa6e2"/><path d="M1 19.8L19 25.2 42.8 19.2 24 12.5z" fill="#e6e6e6"/><path d="M1 19.8L19 25.2V31.8L1 26.8z" fill="#cfcfcf"/><path d="M2.3 21.6L17.8 26.2V30.4L2.3 25.9z" fill="#262626"/><path d="M19 25.2L42.8 19.2V24.8L19 31.8z" fill="url(#drf)"/></svg>
<div class="t" style="left:479px;top:590px;color:#111">Локальный диск (C:)</div>
<div class="a" style="left:479px;top:607px;width:188px;height:12px;background:#e6e6e6;border:1px solid #bcbcbc"></div>
<div class="a" style="left:480px;top:608px;width:115px;height:10px;background:#26a0da"></div>
<div class="t" style="left:479px;top:621px;color:#6d6d6d;letter-spacing:-.3px">11,8 ГБ свободно из 31,2 ГБ</div>

<svg class="a" style="left:687px;top:594px" width="34" height="31" viewBox="0 0 34 31"><defs><linearGradient id="cdg" x1="0" y1="0" x2="1" y2="1"><stop offset="0" stop-color="#3a62c0"/><stop offset=".5" stop-color="#6aaaf0"/><stop offset="1" stop-color="#2e58b8"/></linearGradient></defs><rect x=".5" y="9" width="33" height="21.5" fill="url(#cdg)" stroke="#7a8494"/><path d="M26 .5c-7 1-11 5-12 12h-5l8 10 8-10h-5c.5-5 2.5-8 6-12z" fill="#22d04a" stroke="#118830" stroke-width=".8"/></svg>
<div class="t" style="left:733px;top:590px;color:#111">CD-дисковод (D:)</div>
<div class="t" style="left:733px;top:605px;color:#111;letter-spacing:-.85px">CCCOMA_X64FRE_RU-RU_DV9</div>
<div class="t" style="left:733px;top:621px;color:#6d6d6d;letter-spacing:-.3px">0 байт свободно из 4,94 ГБ</div>

<!-- status bar -->
<div class="t" style="left:262px;top:883px;color:#333;letter-spacing:-.24px">Элементов: 9</div>
<div class="a" style="left:344px;top:882px;width:1px;height:17px;background:#f0f0f0"></div>
<div class="t" style="left:355px;top:883px;color:#333;letter-spacing:-.17px">Выбран 1 элемент</div>
<div class="a" style="left:466px;top:882px;width:1px;height:17px;background:#f0f0f0"></div>
<svg class="a" style="left:1326px;top:883px" width="17" height="13" viewBox="0 0 17 13"><rect x=".5" y=".5" width="4" height="12" fill="none" stroke="#777"/><g fill="#555"><rect x="2" y="2" width="1" height="1"/><rect x="2" y="6" width="1" height="1"/><rect x="2" y="10" width="1" height="1"/><rect x="6" y="2" width="4" height="1"/><rect x="12" y="2" width="4" height="1"/><rect x="6" y="6" width="4" height="1"/><rect x="12" y="6" width="4" height="1"/><rect x="6" y="10" width="4" height="1"/><rect x="12" y="10" width="4" height="1"/></g></svg>
<svg class="a" style="left:1349px;top:884px" width="14" height="12" viewBox="0 0 14 12"><rect x=".5" y=".5" width="13" height="11" fill="#fff" stroke="#777"/><rect x="2" y="2" width="10" height="8" fill="#5a90c8"/><path d="M2 6c3 0 6 2 10 2v2H2z" fill="#2a5a4a"/></svg>


<!-- Properties dialog -->
<div class="a" id="dlg" style="left:922px;top:630px;width:363px;height:499px;background:#f0f0f0;border:1px solid rgba(5,35,70,.8);box-shadow:0 0 14px rgba(0,0,0,.35)">
  <div class="a" style="left:0;top:0;width:361px;height:31px;background:#fff"></div>
</div>
<style>
.d{position:absolute;white-space:nowrap;line-height:16px;height:16px;font-size:11.5px;letter-spacing:-.25px;color:#111}
.tab{position:absolute;background:#f0f0f0;border:1px solid #d9d9d9}
</style>
<!-- title -->
<svg class="a" style="left:931px;top:640px" width="16" height="13" viewBox="0 0 16 13"><path d="M0 1l2.5-.5V4H0zM3 .4L6 0v4H3zM0 4.5h2.5V8L0 7.5zM3 4.5h3v4l-3-.5z" fill="#0aa4e0"/><path d="M0 9l7 2 8-2-7-1.5z" fill="#e0e0e0"/><path d="M0 9l7 2v2L0 11z" fill="#333"/><path d="M7 11l8-2v2l-8 2z" fill="#b8b8b8"/></svg>
<div class="t" style="left:952px;top:638px;font-size:12px;letter-spacing:-.15px;color:#111">Свойства: Локальный диск (C:)</div>
<svg class="a" style="left:1263px;top:640px" width="12" height="12" viewBox="0 0 12 12"><path d="M1 1l10 10M11 1L1 11" stroke="#111" stroke-width="1.1"/></svg>

<!-- tabs row 1 -->
<div class="tab" style="left:931px;top:671px;width:118px;height:18px"></div>
<div class="tab" style="left:1048px;top:671px;width:152px;height:18px"></div>
<div class="tab" style="left:1199px;top:671px;width:75px;height:18px"></div>
<div class="d" style="left:931px;width:118px;text-align:center;top:672px;letter-spacing:-.2px">Безопасность</div>
<div class="d" style="left:1048px;width:152px;text-align:center;top:672px;letter-spacing:-.4px">Предыдущие версии</div>
<div class="d" style="left:1199px;width:75px;text-align:center;top:672px">Квота</div>
<!-- tabs row 2 -->
<div class="tab" style="left:1007px;top:688px;width:78px;height:19px"></div>
<div class="tab" style="left:1084px;top:688px;width:115px;height:19px"></div>
<div class="tab" style="left:1198px;top:688px;width:76px;height:19px"></div>
<div class="d" style="left:1007px;width:78px;text-align:center;top:690px">Сервис</div>
<div class="d" style="left:1084px;width:115px;text-align:center;top:690px">Оборудование</div>
<div class="d" style="left:1198px;width:76px;text-align:center;top:690px">Доступ</div>
<!-- panel -->
<div class="a" style="left:929px;top:706px;width:347px;height:385px;background:#fff;border:1px solid #d9d9d9"></div>
<div class="a" style="left:929px;top:686px;width:79px;height:22px;background:#fff;border:1px solid #d9d9d9;border-bottom:none"></div>
<div class="d" style="left:930px;width:78px;text-align:center;top:688px">Общие</div>

<!-- drive icon -->
<svg class="a" style="left:945px;top:727px" width="26" height="23" viewBox="0 0 44 39"><path d="M.7 2L7.1 1.3V9.3H.7zM8.2 1.2L16.9.4V9.3H8.2zM.7 10.2H7.1V18L.7 17.4zM8.2 10.2H16.9V18.8L8.2 18z" fill="#0aa6e2"/><path d="M1 22.8L19 28.2 42.8 22.2 24 15.5z" fill="#e6e6e6"/><path d="M1 22.8L19 28.2V36.8L1 31.8z" fill="#cfcfcf"/><path d="M2.3 24.6L17.8 29.2V35L2.3 30.5z" fill="#262626"/><path d="M19 28.2L42.8 22.2V29.8L19 36.8z" fill="#c4c4c4"/></svg>
<div class="a" style="left:1017px;top:726px;width:246px;height:23px;border:1px solid #0078d7;background:#fff"></div>
<div class="a" style="left:944px;top:760px;width:317px;height:1px;background:#a0a0a0"></div>

<div class="d" style="left:944px;top:769px">Тип:</div>
<div class="d" style="left:1052px;top:769px">Локальный диск</div>
<div class="d" style="left:944px;top:789px;letter-spacing:-.15px">Файловая система:</div>
<div class="d" style="left:1052px;top:789px">NTFS</div>
<div class="a" style="left:944px;top:812px;width:317px;height:1px;background:#a0a0a0"></div>

<div class="a" style="left:944px;top:820px;width:15px;height:15px;background:#26a0da"></div>
<div class="d" style="left:965px;top:819px">Занято:</div>
<div class="d" style="left:1064px;top:819px;letter-spacing:-.36px">20 820 365 312 байт</div>
<div class="d" style="left:1191px;top:819px;letter-spacing:-.3px">19,3 ГБ</div>
<div class="a" style="left:944px;top:841px;width:15px;height:15px;background:#a9a9a9"></div>
<div class="d" style="left:965px;top:840px">Свободно:</div>
<div class="d" style="left:1064px;top:840px;letter-spacing:-.36px">12 688 334 848 байт</div>
<div class="d" style="left:1191px;top:840px;letter-spacing:-.3px">11,8 ГБ</div>
<div class="a" style="left:944px;top:866px;width:317px;height:1px;background:#a0a0a0"></div>

<div class="d" style="left:965px;top:874px">Емкость:</div>
<div class="d" style="left:1064px;top:874px;letter-spacing:-.36px">33 508 700 160 байт</div>
<div class="d" style="left:1191px;top:874px;letter-spacing:-.3px">31,2 ГБ</div>

<!-- donut -->
<svg class="a" style="left:1072px;top:895px" width="62" height="62" viewBox="-31 -31 62 62">
 <circle r="22.75" fill="none" stroke="#26a0da" stroke-width="11"/>
 <path d="M16.75 15.43 A22.75 22.75 0 0 1 -22.75 0" fill="none" stroke="#a9a9a9" stroke-width="11"/>
</svg>
<div class="d" style="left:1052px;width:100px;text-align:center;top:967px">Диск C:</div>
<div class="a" style="left:1174px;top:959px;width:88px;height:21px;background:#e1e1e1;border:1px solid #adadad"></div>
<div class="d" style="left:1174px;width:88px;text-align:center;top:962px;letter-spacing:-.3px">Очистка диска</div>
<div class="a" style="left:944px;top:986px;width:317px;height:1px;background:#a0a0a0"></div>

<!-- checkboxes -->
<div class="a" style="left:944px;top:1019px;width:13px;height:13px;border:1px solid #333;background:#fff"></div>
<div class="d" style="left:960px;top:1018px;letter-spacing:-.19px">Сжать этот диск для экономии места</div>
<div class="a" style="left:944px;top:1042px;width:13px;height:13px;border:1px solid #333;background:#fff"></div>
<svg class="a" style="left:945px;top:1043px" width="11" height="11" viewBox="0 0 11 11"><path d="M1.5 5.5l3 3 5-6.5" fill="none" stroke="#222" stroke-width="1.2"/></svg>
<div class="d" style="left:960px;top:1040px;letter-spacing:-.27px">Разрешить индексировать содержимое файлов на этом</div>
<div class="d" style="left:960px;top:1053px;letter-spacing:-.27px">диске в дополнение к свойствам файла</div>

<!-- buttons -->
<div class="a" style="left:1042px;top:1099px;width:73px;height:21px;background:#e1e1e1;border:2px solid #0078d7"></div>
<div class="d" style="left:1042px;width:73px;text-align:center;top:1101px">ОК</div>
<div class="a" style="left:1123px;top:1099px;width:73px;height:21px;background:#e1e1e1;border:1px solid #adadad"></div>
<div class="d" style="left:1123px;width:73px;text-align:center;top:1101px">Отмена</div>
<div class="a" style="left:1204px;top:1099px;width:73px;height:21px;background:#cccccc;border:1px solid #bfbfbf"></div>
<div class="d" style="left:1204px;width:73px;text-align:center;top:1101px;color:#8a8a8a">Применить</div>


<!-- Taskbar -->
<div class="a" id="tb" style="left:0;top:1160px;width:1600px;height:40px;background:linear-gradient(90deg,#c9e2ee,#cad9ec)"></div>
<!-- start -->
<svg class="a" style="left:16px;top:1172px" width="17" height="17" viewBox="0 0 17 17"><path d="M0 2.3L6.8 1.3V8H0zM7.8 1.1L17 0V8H7.8zM0 9h6.8v6.7L0 14.7zM7.8 9H17v8L7.8 15.9z" fill="#111"/></svg>
<!-- search box -->
<div class="a" style="left:49px;top:1161px;width:342px;height:39px;background:#fff;border-bottom:1px solid #c8c8c8"></div>
<svg class="a" style="left:59px;top:1172px" width="18" height="17" viewBox="0 0 18 17"><circle cx="11" cy="6.5" r="5.2" fill="none" stroke="#222" stroke-width="1.4"/><path d="M7.2 10.3L1 16.5" stroke="#222" stroke-width="1.5"/></svg>
<div class="t" style="left:88px;top:1171px;height:20px;line-height:20px;font-size:15px;color:#333">Чтобы начать поиск, введите здесь запрос</div>
<!-- task view -->
<svg class="a" style="left:407px;top:1171px" width="18" height="17" viewBox="0 0 18 17"><path d="M1 3.2V1.5h11v1.7M1 13.8v1.7h11v-1.7" fill="none" stroke="#111" stroke-width="1.2"/><rect x="1.6" y="5.2" width="9.8" height="6.8" fill="none" stroke="#111" stroke-width="1.3"/><rect x="14.6" y="4.6" width="2.4" height="2.8" fill="#111"/><path d="M15.8 0v3.2M15.8 8.4V17" stroke="#111" stroke-width="1.1"/></svg>
<!-- explorer active -->
<div class="a" style="left:443px;top:1160px;width:45px;height:40px;background:rgba(255,255,255,.5)"></div>
<div class="a" style="left:443px;top:1197px;width:45px;height:3px;background:#0a74d4"></div>
<svg class="a" style="left:456px;top:1171px" width="22" height="18" viewBox="0 0 22 18"><rect x="0" y="1" width="21" height="16" fill="#f8d262"/><rect x="0" y="0" width="9.5" height="2.4" fill="#d9a328"/><rect x="0" y="2.4" width="21" height="1" fill="#eab640" opacity=".6"/><path d="M4 17.7V10.2h14v7.5h-4v-4.2H8v4.2z" fill="#2f88de"/></svg>
<!-- mail -->
<svg class="a" style="left:503px;top:1169px" width="26" height="20" viewBox="0 0 26 20"><path d="M.5 5.5L12.5.3 24.5 5.5V19H.5z" fill="#3b3f44"/><path d="M4.5 6.3L22.5 6 13.3 12.8z" fill="#e8eef2"/><path d="M.5 5.5l12 8.5 12-8.5" fill="none" stroke="#3b3f44" stroke-width="1"/></svg>

<!-- tray -->
<svg class="a" style="left:1354px;top:1176px" width="14" height="8" viewBox="0 0 14 8"><path d="M1 7l6-6 6 6" fill="none" stroke="#111" stroke-width="1.3"/></svg>
<svg class="a" style="left:1378px;top:1170px" width="16" height="20" viewBox="0 0 16 20"><path d="M3.5 3.3C5 1.9 9.8 1.9 11.3 3.3M3.5 16.7C5 18.1 9.8 18.1 11.3 16.7" fill="none" stroke="#111" stroke-width="1.2"/><rect x="2.6" y="6.4" width="7.6" height="7.2" rx="1.6" fill="none" stroke="#111" stroke-width="1.3"/><path d="M10.2 8.6l2.6-1.6v6l-2.6-1.6" fill="none" stroke="#111" stroke-width="1.2"/></svg>
<svg class="a" style="left:1400px;top:1173px" width="18" height="15" viewBox="0 0 18 15"><rect x="1.6" y="1.6" width="15" height="9.2" fill="none" stroke="#111" stroke-width="1.2"/><rect x="1.2" y="1.2" width="3.8" height="4.2" fill="#cbd8ea" stroke="#111" stroke-width="1.1"/><path d="M3.1 5.4V13.8M9.2 10.8V13.1M6 13.3h6.5" stroke="#111" stroke-width="1.2"/></svg>
<svg class="a" style="left:1424px;top:1172px" width="18" height="16" viewBox="0 0 18 16"><path d="M1.3 5.2h3L8.3 1.8v12.4L4.3 10.8h-3z" fill="none" stroke="#111" stroke-width="1.3"/><path d="M10.5 5.6c.8 1.4.8 3.4 0 4.8M12.9 3.8c1.6 2.4 1.6 6 0 8.4M15.3 1.7c2.6 3.5 2.6 9.1 0 12.6" fill="none" stroke="#111" stroke-width="1.2"/></svg>
<div class="t" style="left:1451px;top:1172px;color:#111;letter-spacing:-.9px">ENG</div>
<div class="t" style="left:1487px;width:54px;text-align:center;top:1163px;color:#111;letter-spacing:-.3px">9:52</div>
<div class="t" style="left:1485px;width:58px;text-align:center;top:1181px;color:#111;letter-spacing:-.6px">02.03.2026</div>
<svg class="a" style="left:1557px;top:1171px" width="26" height="26" viewBox="0 0 26 26"><path d="M1 1h15v11H7l-3 3.5V12H1z" fill="#111"/><path d="M3.5 4h10M3.5 6.5h10M3.5 9h7" stroke="#c9d9ea" stroke-width="1"/><circle cx="17" cy="18" r="7" fill="#c9d9ea" stroke="#666" stroke-width="1.2"/><text x="17" y="22.5" text-anchor="middle" font-family="Liberation Sans" font-size="12" fill="#111">1</text></svg>
<div class="a" style="left:1595px;top:1160px;width:1px;height:40px;background:#9aa6b4"></div>


</body></html>
